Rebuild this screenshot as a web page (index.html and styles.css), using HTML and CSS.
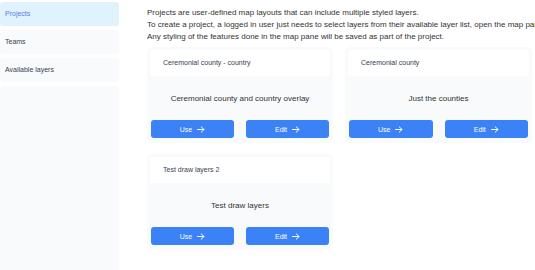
FILE: index.html
```html
<!DOCTYPE html>
<html>
<head>
<meta charset="utf-8">
<link rel="stylesheet" href="styles.css">
</head>
<body>
<div class="layout">
  <nav class="sidebar">
    <div class="nav-item active">Projects</div>
    <div class="nav-item">Teams</div>
    <div class="nav-item">Available layers</div>
    <div class="nav-item filler"></div>
  </nav>
  <main class="main">
    <div class="intro">
      <p>Projects are user-defined map layouts that can include multiple styled layers.</p>
      <p>To create a project, a logged in user just needs to select layers from their available layer list, open the map pane and style the features.</p>
      <p>Any styling of the features done in the map pane will be saved as part of the project.</p>
    </div>
    <div class="cards">
      <div class="card">
        <div class="card-head">Ceremonial county - country</div>
        <div class="card-body">Ceremonial county and country overlay</div>
        <div class="card-actions">
          <button class="btn">Use <svg class="arrow" viewBox="0 0 8 7"><path d="M0.5 3.5H7M4.2 0.8L7 3.5L4.2 6.2"/></svg></button>
          <button class="btn">Edit <svg class="arrow" viewBox="0 0 8 7"><path d="M0.5 3.5H7M4.2 0.8L7 3.5L4.2 6.2"/></svg></button>
        </div>
      </div>
      <div class="card">
        <div class="card-head">Ceremonial county</div>
        <div class="card-body">Just the counties</div>
        <div class="card-actions">
          <button class="btn">Use <svg class="arrow" viewBox="0 0 8 7"><path d="M0.5 3.5H7M4.2 0.8L7 3.5L4.2 6.2"/></svg></button>
          <button class="btn">Edit <svg class="arrow" viewBox="0 0 8 7"><path d="M0.5 3.5H7M4.2 0.8L7 3.5L4.2 6.2"/></svg></button>
        </div>
      </div>
      <div class="card">
        <div class="card-head">Test draw layers 2</div>
        <div class="card-body">Test draw layers</div>
        <div class="card-actions">
          <button class="btn">Use <svg class="arrow" viewBox="0 0 8 7"><path d="M0.5 3.5H7M4.2 0.8L7 3.5L4.2 6.2"/></svg></button>
          <button class="btn">Edit <svg class="arrow" viewBox="0 0 8 7"><path d="M0.5 3.5H7M4.2 0.8L7 3.5L4.2 6.2"/></svg></button>
        </div>
      </div>
    </div>
  </main>
</div>
</body>
</html>
```
FILE: styles.css
```css
html, body {
  margin: 0;
  padding: 0;
  height: 100%;
  overflow: hidden;
  background: #ffffff;
  font-family: "Liberation Sans", Arial, sans-serif;
  color: #374151;
}
.layout {
  display: flex;
  gap: 28px;
  height: 270px;
}
.sidebar {
  width: 119px;
  flex: none;
  display: flex;
  flex-direction: column;
  gap: 4px;
  padding-top: 2px;
  box-sizing: border-box;
}
.nav-item {
  height: 24px;
  line-height: 24px;
  padding-left: 5px;
  font-size: 7px;
  color: #374151;
  background: #f9fafb;
  border-radius: 3px;
}
.nav-item.active {
  background: #e0f2fe;
  color: #5a78f0;
}
.nav-item.filler {
  flex: 1;
  border-radius: 3px 3px 0 0;
}
.main {
  flex: 1;
  min-width: 0;
  padding-top: 7px;
}
.intro p {
  margin: 0;
  font-size: 8px;
  line-height: 12px;
  white-space: nowrap;
  color: #333333;
}
.cards {
  margin-top: 4px;
  display: grid;
  grid-template-columns: 186px 187px;
  column-gap: 12px;
  row-gap: 11px;
}
.card {
  background: #f8fafc;
  border-radius: 5px;
  padding: 3px 3px 5px;
}
.card-head {
  background: #ffffff;
  border-radius: 2px;
  height: 26px;
  line-height: 26px;
  padding-left: 13px;
  font-size: 7px;
  color: #374151;
}
.card-body {
  height: 44px;
  display: flex;
  align-items: center;
  justify-content: center;
  font-size: 8px;
  color: #333333;
}
.card-actions {
  display: flex;
  gap: 12px;
  padding: 0 1px;
}
.btn {
  flex: 1;
  height: 18px;
  border: none;
  border-radius: 3px;
  background: #3b82f6;
  color: #ffffff;
  font-family: "Liberation Sans", Arial, sans-serif;
  font-size: 7px;
  display: flex;
  align-items: center;
  justify-content: center;
  gap: 5px;
  padding: 0;
}
.arrow {
  width: 8px;
  height: 7px;
  fill: none;
  stroke: #ffffff;
  stroke-width: 1;
  stroke-linecap: round;
  stroke-linejoin: round;
}
```
